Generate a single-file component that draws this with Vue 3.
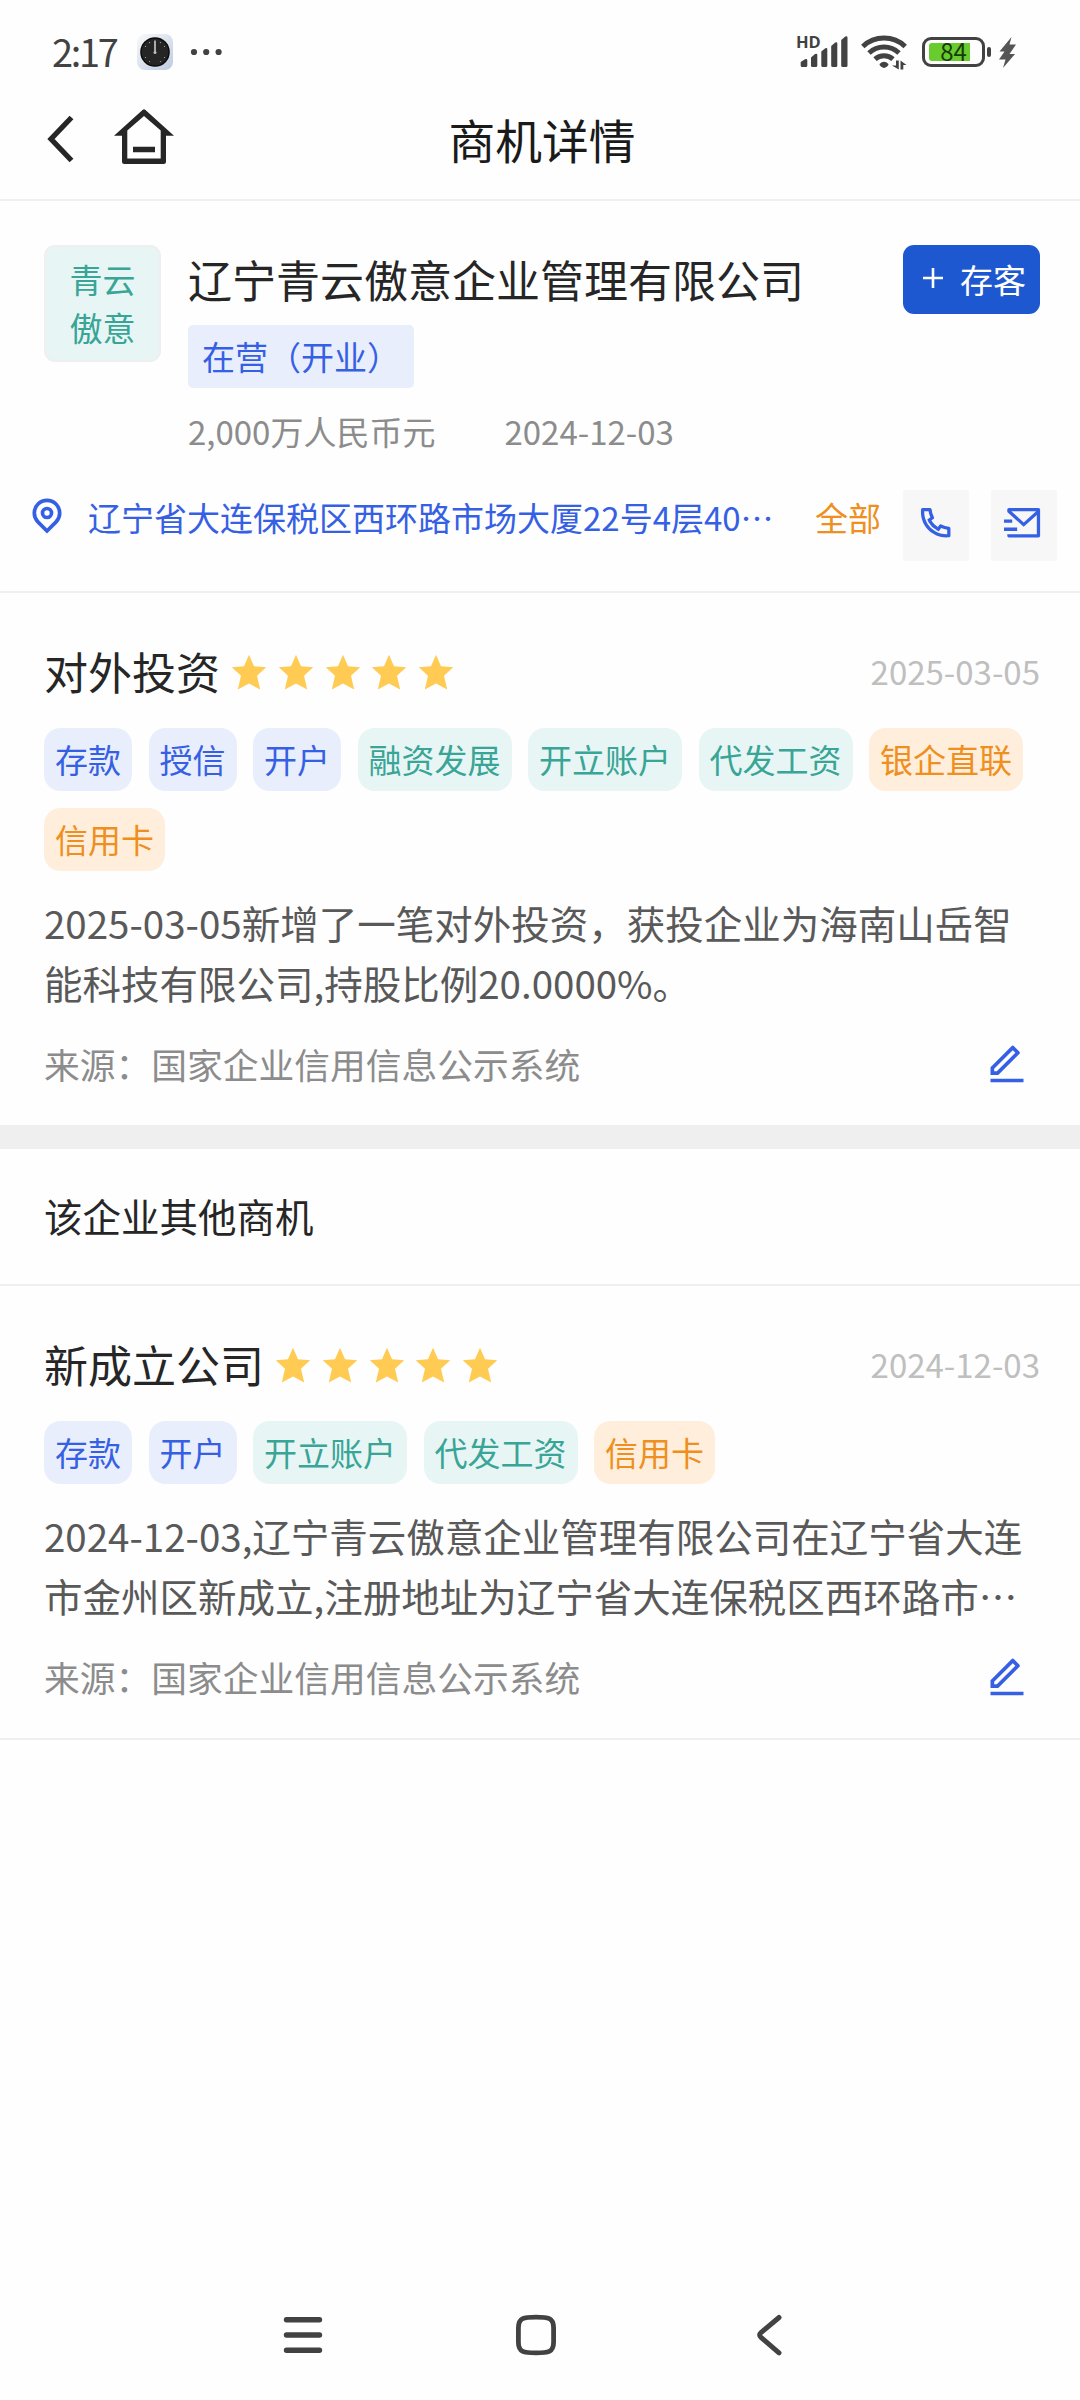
<script setup>
const company = {
  short: ['青云', '傲意'],
  name: '辽宁青云傲意企业管理有限公司',
  status: '在营（开业）',
  capital: '2,000万人民币元',
  founded: '2024-12-03',
  address: '辽宁省大连保税区西环路市场大厦22号4层40…',
}

const current = {
  title: '对外投资',
  date: '2025-03-05',
  tags: [
    { text: '存款', tone: 'blue' },
    { text: '授信', tone: 'blue' },
    { text: '开户', tone: 'blue' },
    { text: '融资发展', tone: 'teal' },
    { text: '开立账户', tone: 'teal' },
    { text: '代发工资', tone: 'teal' },
    { text: '银企直联', tone: 'orange' },
    { text: '信用卡', tone: 'orange' },
  ],
  desc: '2025-03-05新增了一笔对外投资，获投企业为海南山岳智能科技有限公司,持股比例20.0000%。',
  source: '来源：国家企业信用信息公示系统',
}

const other = {
  title: '新成立公司',
  date: '2024-12-03',
  tags: [
    { text: '存款', tone: 'blue' },
    { text: '开户', tone: 'blue' },
    { text: '开立账户', tone: 'teal' },
    { text: '代发工资', tone: 'teal' },
    { text: '信用卡', tone: 'orange' },
  ],
  desc: '2024-12-03,辽宁青云傲意企业管理有限公司在辽宁省大连市金州区新成立,注册地址为辽宁省大连保税区西环路市…',
  source: '来源：国家企业信用信息公示系统',
}

// The current opportunity comes first, followed by the company's other ones.
const sections = [
  { heading: '', item: current },
  { heading: '该企业其他商机', item: other },
]
</script>

<template>
  <div class="screen" lang="zh-CN">
    <div class="status-bar">
      <span class="time">2:17</span>
      <svg class="app-badge" viewBox="0 0 36 36">
        <defs>
          <linearGradient id="badge" x1="0" y1="0" x2="1" y2="1">
            <stop offset="0" stop-color="#f8fafc" />
            <stop offset="1" stop-color="#bdcbe0" />
          </linearGradient>
        </defs>
        <rect width="36" height="36" rx="8" fill="url(#badge)" />
        <circle cx="18" cy="18" r="14.8" fill="#0c0c0d" />
        <circle cx="18" cy="18" r="13.3" fill="#252526" />
        <path d="M18 6.500V18.500" stroke="#aaa" stroke-width="2" />
        <circle cx="18" cy="18.500" r="1.500" fill="#bbb" />
        <g fill="#aaa">
          <circle cx="12.600" cy="8.600" r=".6" /><circle cx="23.400" cy="8.600" r=".6" />
          <circle cx="8.500" cy="12.500" r=".6" /><circle cx="27.500" cy="12.500" r=".6" />
          <circle cx="8.500" cy="23.500" r=".6" /><circle cx="27.500" cy="23.500" r=".6" />
          <circle cx="12.600" cy="27.500" r=".6" /><circle cx="23.400" cy="27.500" r=".6" />
        </g>
      </svg>
      <svg class="dots" viewBox="0 0 32 8" fill="#424242">
        <circle cx="4" cy="4" r="3.100" /><circle cx="16.200" cy="4" r="3.100" /><circle cx="28.600" cy="4" r="3.100" />
      </svg>

      <div class="signal">
        <span class="hd">HD</span>
        <svg viewBox="0 0 48 32" fill="#424242">
          <path d="M.7 26 5 23.300Q7.300 22.500 7.300 24.500V29.500Q7.300 31 5.800 31H2.200Q.7 31 .7 29.500Z" />
          <path d="M11 21.500 15 18Q17.300 17 17.300 19V29.500Q17.300 31 15.800 31H12.500Q11 31 11 29.500Z" />
          <path d="M21.300 15.500 25.300 12.300Q27.300 11.500 27.300 13.500V29.500Q27.300 31 25.800 31H22.800Q21.300 31 21.300 29.500Z" />
          <path d="M31.200 10 35.200 6.500Q37.300 5.500 37.300 7.500V29.500Q37.300 31 35.800 31H32.700Q31.200 31 31.200 29.500Z" />
          <path d="M41.200 4 45.300 .6Q47.500 -.3 47.500 1.700V29.500Q47.500 31 46 31H42.700Q41.200 31 41.200 29.500Z" />
        </svg>
      </div>
      <svg class="wifi" viewBox="0 0 46 36">
        <g fill="none" stroke="#424242" stroke-width="5">
          <path d="M1.800 12.500A31 31 0 0 1 44.200 12.500" />
          <path d="M8 19A22 22 0 0 1 38 19" />
          <path d="M14 25.200A13.500 13.500 0 0 1 32 25.200" />
        </g>
        <path d="M18.500 30Q23 25.500 27.500 30Q27.500 32.500 23 34Q18.500 32.500 18.500 30Z" fill="#424242" />
        <path d="M35 26.500H37.800V35.500L31 31.500H35ZM39.500 35.500V26.500L45.500 31H42.300V35.500Z" fill="#424242" />
      </svg>
      <div class="battery">
        <div class="level"></div>
        <span class="percent">84</span>
      </div>
      <div class="nub"></div>
      <svg class="bolt" viewBox="0 0 18 31" fill="#555">
        <path d="M13.500 0 1.500 14.500H6.500L1 22.500H7.500L5 31 17 17H11.500L18 7.500H11.500Z" />
      </svg>
    </div>

    <header class="nav-bar">
      <div class="nav-left">
        <svg class="back" viewBox="0 0 28 48" fill="none" stroke="#262626" stroke-width="5.300">
          <path d="M24.500 2.500 4 24 24.500 45.500" />
        </svg>
        <svg class="home" viewBox="0 0 60 55" fill="#262626" fill-rule="evenodd">
          <path d="M28.800 .8Q30 -.2 31.200 .8L60 26.800H52V52.500Q52 55 49.500 55H10.500Q8 55 8 52.500V26.800H0ZM30 7 13.300 21.500V49.500H46.700V21.500ZM19 37.700H41V43.300H19Z" />
        </svg>
      </div>
      <h1>商机详情</h1>
      <div class="nav-right"></div>
    </header>

    <section class="company">
      <div class="company-top">
        <div class="avatar">
          <span v-for="line in company.short" :key="line">{{ line }}</span>
        </div>
        <div class="info">
          <div class="name">{{ company.name }}</div>
          <div class="state">{{ company.status }}</div>
          <div class="meta">
            <span>{{ company.capital }}</span>
            <span>{{ company.founded }}</span>
          </div>
        </div>
        <button class="save">
          <svg viewBox="0 0 20 20" stroke="#fff" stroke-width="2.600"><path d="M10 0V20M0 10H20" /></svg>
          <span>存客</span>
        </button>
      </div>
      <div class="contact">
        <svg class="pin" viewBox="0 0 30 36" fill="none" stroke="#3660e4" stroke-width="3.700">
          <path d="M15 33 5.900 23.900A12.700 12.700 0 1 1 24.100 23.900Z" />
          <circle cx="15" cy="15" r="4.500" />
        </svg>
        <span class="address">{{ company.address }}</span>
        <span class="all">全部</span>
        <div class="action">
          <svg viewBox="0 0 24 24">
            <path d="M9.366 10.682a10.556 10.556 0 0 0 3.952 3.952l.884-1.238a1 1 0 0 1 1.294-.296 11.422 11.422 0 0 0 4.583 1.364 1 1 0 0 1 .921.997v4.462a1 1 0 0 1-.898.995c-.53.055-1.064.082-1.602.082C9.940 21 3 14.060 3 5.500c0-.538.027-1.072.082-1.602A1 1 0 0 1 4.077 3h4.462a1 1 0 0 1 .997.921A11.422 11.422 0 0 0 10.900 8.504a1 1 0 0 1-.296 1.294l-1.238.884zm-2.522-.657 1.900-1.357A13.410 13.410 0 0 1 7.647 5H5.010c-.006.166-.009.333-.009.5C5 12.956 11.044 19 18.500 19c.167 0 .334-.003.5-.01v-2.637a13.410 13.410 0 0 1-3.668-1.097l-1.357 1.900a12.442 12.442 0 0 1-1.588-.75l-.058-.033a12.556 12.556 0 0 1-4.702-4.702l-.033-.058a12.442 12.442 0 0 1-.75-1.588z" />
          </svg>
        </div>
        <div class="action mail">
          <svg viewBox="0 0 24 24">
            <path d="M22 20.007a1 1 0 0 1-.992.993H2.992A.993.993 0 0 1 2 20.007V19h18V7.300l-8 7.200-10-9V4a1 1 0 0 1 1-1h18a1 1 0 0 1 1 1v16.007zM4.434 5L12 11.810 19.566 5H4.434zM0 15h8v2H0v-2zm0-5h5v2H0v-2z" />
          </svg>
        </div>
      </div>
    </section>

    <template v-for="section in sections" :key="section.item.title">
      <h2 v-if="section.heading" class="section-title">{{ section.heading }}</h2>
      <article class="card">
        <div class="card-head">
          <span class="card-title">{{ section.item.title }}</span>
          <svg v-for="n in 5" :key="n" class="star" viewBox="0 0 36 36">
            <path d="M18 .8 23 12.300 35.200 13.300 26 21.800 29.200 35.500 18 29.500 6.800 35.500 10 21.800 .8 13.300 13 12.300Z" fill="#ffcb52" />
          </svg>
          <span class="card-date">{{ section.item.date }}</span>
        </div>
        <div class="tags">
          <span v-for="tag in section.item.tags" :key="tag.text" class="tag" :class="tag.tone">{{ tag.text }}</span>
        </div>
        <p class="desc">{{ section.item.desc }}</p>
        <div class="card-foot">
          <span>{{ section.item.source }}</span>
          <svg class="edit" viewBox="0 0 24 24" fill="#3660e4">
            <path d="M6.414 16L16.556 5.858l-1.414-1.414L5 14.586V16h1.414zm.829 2H3v-4.243L14.435 2.322a1 1 0 0 1 1.414 0l2.829 2.829a1 1 0 0 1 0 1.414L7.243 18zM3 20h18v2H3v-2z" />
          </svg>
        </div>
      </article>
    </template>

    <nav class="system-nav">
      <svg viewBox="0 0 44 44" fill="none" stroke="#424242" stroke-width="5.400" stroke-linecap="round">
        <path d="M5.500 6.800H38.500M5.500 22H38.500M5.500 37.200H38.500" />
      </svg>
      <svg viewBox="0 0 44 44" fill="none" stroke="#424242" stroke-width="4.800">
        <path d="M21 4.200C33 4.200 38.600 4.500 38.600 15V29C38.600 39.500 33 39.800 21 39.800S3.400 39.500 3.400 29V15C3.400 4.500 9 4.200 21 4.200Z" />
      </svg>
      <svg viewBox="0 0 44 44" fill="none" stroke="#424242" stroke-width="5" stroke-linecap="round">
        <path d="M30 4.500 12 19.600Q9.300 22 12 24.400L30 39.800" />
      </svg>
    </nav>
  </div>
</template>

<style>
html,
body {
  margin: 0;
  background: #fefefe;
}
</style>

<style scoped>
.screen {
  display: flex;
  flex-direction: column;
  width: 1080px;
  height: 2400px;
  overflow: hidden;
  background: #fefefe;
  color: #262626;
  font-family: "Noto Sans CJK SC", "Noto Sans", sans-serif;
  font-size: 33px;
}
.screen * {
  box-sizing: border-box;
}
svg {
  display: block;
  flex: none;
}

/* system status bar */
.status-bar {
  display: flex;
  align-items: center;
  height: 104px;
  padding: 0 64px 0 52px;
}
.time {
  width: 85px;
  padding-bottom: 2px;
  color: #424242;
  font-size: 38px;
  line-height: 50px;
  letter-spacing: -2.300px;
}
.app-badge {
  width: 36px;
  height: 36px;
}
.dots {
  width: 32px;
  height: 8px;
  margin-left: 17px;
}
.signal {
  position: relative;
  width: 50px;
  height: 32px;
  margin-left: auto;
}
.signal svg {
  width: 48px;
  height: 32px;
  margin-left: 2px;
}
.hd {
  position: absolute;
  left: -2px;
  top: -3px;
  color: #424242;
  font-family: "Open Sans", sans-serif;
  font-size: 16.500px;
  font-weight: 700;
  line-height: 18px;
}
.wifi {
  width: 46px;
  height: 36px;
  margin-left: 13px;
}
.battery {
  position: relative;
  display: flex;
  width: 63px;
  height: 30px;
  margin-left: 15px;
  padding: 3px 4px;
  border: 3px solid #424242;
  border-radius: 9px;
}
.level {
  width: 41px;
  height: 18px;
  border-radius: 3px 0 0 3px;
  background: #68cb2e;
}
.percent {
  position: absolute;
  inset: 0;
  color: #173c08;
  font-size: 24px;
  line-height: 22px;
  text-align: center;
}
.nub {
  width: 4px;
  height: 10px;
  margin-left: 2px;
  border-radius: 2px;
  background: #424242;
}
.bolt {
  width: 18px;
  height: 31px;
  margin-left: 7px;
}

/* page header */
.nav-bar {
  display: flex;
  align-items: center;
  height: 97px;
  padding: 0 46px 25px 47px;
  border-bottom: 2px solid #efefef;
}
.nav-left,
.nav-right {
  display: flex;
  flex: 1;
}
.back {
  width: 28px;
  height: 48px;
  margin-top: 1px;
}
.home {
  width: 60px;
  height: 55px;
  margin-left: 39px;
  margin-top: -5px;
}
h1,
h2,
p {
  margin: 0;
  font-weight: 400;
}
h1 {
  padding-left: 3px;
  font-size: 46.750px;
  line-height: 70px;
  color: #1a1a1a;
}

/* company summary */
.company {
  padding: 44px 23px 30px 30px;
  border-bottom: 2px solid #efefef;
}
.company-top {
  display: flex;
  align-items: flex-start;
  padding: 0 17px 0 14px;
}
.avatar {
  display: flex;
  flex-direction: column;
  align-items: center;
  justify-content: center;
  width: 117px;
  height: 117px;
  padding-bottom: 2px;
  border: 2px solid #efefef;
  border-radius: 11px;
  background: #e8f5f5;
  color: #38a596;
  line-height: 48px;
}
.info {
  flex: 1;
  margin-left: 27px;
}
.name {
  font-size: 44px;
  line-height: 68px;
  white-space: nowrap;
}
.state {
  width: fit-content;
  height: 63px;
  margin-top: 12px;
  padding: 0 14px;
  border-radius: 5px;
  background: #e8eefb;
  color: #3660e4;
  line-height: 62px;
}
.meta {
  display: flex;
  gap: 69px;
  margin-top: 20px;
  color: #8c8c8c;
  line-height: 46px;
}
.save {
  display: flex;
  align-items: center;
  width: 137px;
  height: 69px;
  padding: 0 0 0 20px;
  border: 0;
  border-radius: 11px;
  background: #1e58d0;
  color: #fff;
  font: inherit;
}
.save svg {
  width: 20px;
  height: 20px;
  margin: 0 17px 3px 0;
}
.save span {
  line-height: 69px;
}
.contact {
  display: flex;
  align-items: flex-start;
  margin-top: 36px;
  line-height: 55px;
  color: #3660e4;
}
.pin {
  width: 34px;
  height: 36px;
  margin-top: 8px;
}
.address {
  width: 727px;
  margin-left: 24px;
  white-space: nowrap;
}
.all {
  width: 88px;
  color: #ee8f20;
}
.action {
  display: flex;
  align-items: center;
  justify-content: center;
  width: 66px;
  height: 71px;
  padding-bottom: 6px;
  background: #f7f7f7;
}
.action svg {
  width: 39.400px;
  height: 39.400px;
  fill: #3660e4;
}
.mail {
  margin-left: 22px;
}

/* opportunity cards */
.card {
  padding: 53px 40px 0 44px;
  border-bottom: 2px solid #efefef;
}
.card-head {
  display: flex;
  align-items: center;
  height: 52px;
}
.card-title {
  margin-right: 11px;
  padding-bottom: 2px;
  font-size: 44px;
  line-height: 52px;
}
.star {
  width: 36px;
  height: 36px;
  margin-right: 10.750px;
}
.card-date {
  margin-left: auto;
  padding-bottom: 3px;
  color: #bfbfbf;
}
.tags {
  display: flex;
  flex-wrap: wrap;
  gap: 17px 16.500px;
  margin-top: 30px;
}
.tag {
  height: 63px;
  padding: 0 11px;
  border-radius: 16.500px;
  line-height: 62px;
}
.blue {
  background: #e8eefb;
  color: #3660e4;
}
.teal {
  background: #e8f5f5;
  color: #38a596;
}
.orange {
  background: #ffeedb;
  color: #ee8f20;
}
.desc {
  margin-top: 20.500px;
  color: #595959;
  font-size: 38.500px;
  line-height: 60.500px;
}
.card-foot {
  display: flex;
  align-items: center;
  justify-content: space-between;
  height: 52px;
  margin: 24.500px 11px 36px 0;
  color: #8c8c8c;
  font-size: 35.750px;
}
.edit {
  width: 44px;
  height: 44px;
  margin-top: 1px;
}
.section-title {
  height: 161px;
  margin-top: -2px;
  border-top: 24px solid #efefef;
  border-bottom: 2px solid #efefef;
  padding-left: 44px;
  font-size: 38.500px;
  line-height: 132px;
}

/* gesture keys */
.system-nav {
  display: flex;
  justify-content: space-between;
  margin-top: auto;
  padding: 0 287px 43px 281px;
}
.system-nav svg {
  width: 44px;
  height: 44px;
}
</style>
